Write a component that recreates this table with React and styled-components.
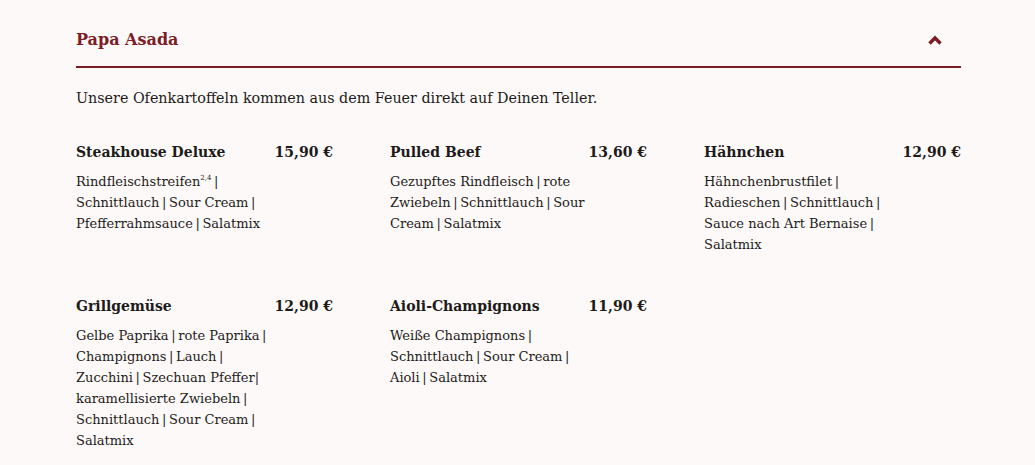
import React from "react";
import styled, { createGlobalStyle } from "styled-components";

const GlobalStyle = createGlobalStyle`
  html, body {
    margin: 0;
    background: #fcf9f8;
  }
  body {
    font-family: "DejaVu Serif", "Liberation Serif", serif;
    color: #1c1b1a;
  }
`;

// thin spaces around the separators, like the menu print
const pipes = (text) =>
  text.replace(/ \| /g, "\u2009|\u2009").replace(/ \|$/, "\u2009|");

const items = [
  {
    name: "Steakhouse Deluxe",
    price: "15,90 €",
    lines: [
      <>Rindfleischstreifen<sup>2,4</sup>{"\u2009|"}</>,
      "Schnittlauch | Sour Cream |",
      "Pfefferrahmsauce | Salatmix",
    ],
  },
  {
    name: "Pulled Beef",
    price: "13,60 €",
    lines: [
      "Gezupftes Rindfleisch | rote",
      "Zwiebeln | Schnittlauch | Sour",
      "Cream | Salatmix",
    ],
  },
  {
    name: "Hähnchen",
    price: "12,90 €",
    lines: [
      "Hähnchenbrustfilet |",
      "Radieschen | Schnittlauch |",
      "Sauce nach Art Bernaise |",
      "Salatmix",
    ],
  },
  {
    name: "Grillgemüse",
    price: "12,90 €",
    lines: [
      "Gelbe Paprika | rote Paprika |",
      "Champignons | Lauch |",
      "Zucchini | Szechuan Pfeffer|",
      "karamellisierte Zwiebeln |",
      "Schnittlauch | Sour Cream |",
      "Salatmix",
    ],
  },
  {
    name: "Aioli-Champignons",
    price: "11,90 €",
    lines: [
      "Weiße Champignons |",
      "Schnittlauch | Sour Cream |",
      "Aioli | Salatmix",
    ],
  },
];

const App = () => {
  return (
    <>
      <GlobalStyle />
      <Section>
        <Header>
          <Title>Papa Asada</Title>
          <Toggle aria-label="collapse">
            <svg width="16" height="12" viewBox="0 0 16 12">
              <polyline
                points="2.5,9.5 8,4 13.5,9.5"
                fill="none"
                stroke="#7b1c27"
                strokeWidth="3.4"
              />
            </svg>
          </Toggle>
        </Header>

        <Intro>Unsere Ofenkartoffeln kommen aus dem Feuer direkt auf Deinen Teller.</Intro>

        <Grid>
          {items.map((item) => (
            <Item key={item.name}>
              <ItemHead>
                <ItemName>{item.name}</ItemName>
                <Price>{item.price}</Price>
              </ItemHead>
              <Description>
                {item.lines.map((line, i) => (
                  <Line key={i}>{typeof line === "string" ? pipes(line) : line}</Line>
                ))}
              </Description>
            </Item>
          ))}
        </Grid>
      </Section>
    </>
  );
};

const Section = styled.section`
  width: 885px;
  margin: 0 0 0 76px;
  padding-top: 28px;
`;

const Header = styled.div`
  display: flex;
  align-items: center;
  justify-content: space-between;
  height: 24px;
  padding-bottom: 14px;
  border-bottom: 2px solid #7b1c27;
`;

const Title = styled.h2`
  margin: 0;
  font-size: 16px;
  line-height: 24px;
  font-weight: 700;
  color: #7b1c27;
`;

const Toggle = styled.div`
  display: flex;
  align-items: center;
  margin-right: 18px;
`;

const Intro = styled.p`
  margin: 19px 0 0;
  font-size: 14.3px;
  line-height: 22px;
`;

const Grid = styled.div`
  display: grid;
  grid-template-columns: repeat(3, 257px);
  column-gap: 57px;
  row-gap: 41px;
  margin-top: 33px;
`;

const Item = styled.div`
  display: flex;
  flex-direction: column;
  gap: 9px;
`;

const ItemHead = styled.div`
  display: flex;
  justify-content: space-between;
  align-items: baseline;
`;

const ItemName = styled.span`
  font-size: 14px;
  line-height: 20px;
  font-weight: 700;
`;

const Price = styled.span`
  font-size: 14px;
  line-height: 20px;
  font-weight: 700;
`;

const Description = styled.div`
  font-size: 13px;
  line-height: 21px;

  sup {
    font-size: 7px;
    vertical-align: 6px;
    line-height: 0;
  }
`;

const Line = styled.div`
  white-space: nowrap;
`;

export default App;
